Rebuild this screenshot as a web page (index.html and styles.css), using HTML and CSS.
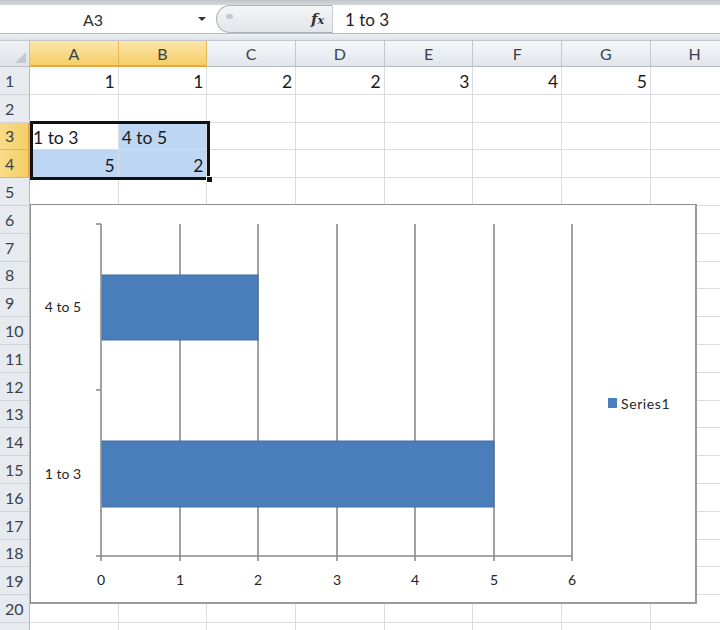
FILE: index.html
```html
<!DOCTYPE html>
<html lang="en">
<head>
    <meta charset="UTF-8">
    <meta name="viewport" content="width=device-width, initial-scale=1.0">
    <title>Book1 - Bar chart</title>
    <link rel="stylesheet" href="styles.css">
</head>
<body>
    <div class="ribbon-edge"></div>
    <div class="formula-bar">
        <div class="name-box">
            <span class="name">A3</span>
            <span class="caret"></span>
        </div>
        <div class="fx-box">
            <span class="grip"></span>
            <span class="fx">f<span class="fx-x">x</span></span>
        </div>
        <div class="formula">1 to 3</div>
    </div>
    <div class="bar-gap"></div>

    <div class="sheet">
        <div class="corner"><span class="corner-tri"></span></div>
        <div class="hd sel-h">A</div><div class="hd sel-h">B</div><div class="hd">C</div><div class="hd">D</div>
        <div class="hd">E</div><div class="hd">F</div><div class="hd">G</div><div class="hd">H</div>

        <div class="rh">1</div><div class="c num">1</div><div class="c num">1</div><div class="c num">2</div><div class="c num">2</div><div class="c num">3</div><div class="c num">4</div><div class="c num">5</div><div class="c"></div>
        <div class="rh">2</div><div class="c"></div><div class="c"></div><div class="c"></div><div class="c"></div><div class="c"></div><div class="c"></div><div class="c"></div><div class="c"></div>
        <div class="rh sel-h">3</div><div class="c">1 to 3</div><div class="c fill">4 to 5</div><div class="c"></div><div class="c"></div><div class="c"></div><div class="c"></div><div class="c"></div><div class="c"></div>
        <div class="rh sel-h">4</div><div class="c num fill">5</div><div class="c num fill">2</div><div class="c"></div><div class="c"></div><div class="c"></div><div class="c"></div><div class="c"></div><div class="c"></div>
        <div class="rh">5</div><div class="c"></div><div class="c"></div><div class="c"></div><div class="c"></div><div class="c"></div><div class="c"></div><div class="c"></div><div class="c"></div>
        <div class="rh">6</div><div class="c"></div><div class="c"></div><div class="c"></div><div class="c"></div><div class="c"></div><div class="c"></div><div class="c"></div><div class="c"></div>
        <div class="rh">7</div><div class="c"></div><div class="c"></div><div class="c"></div><div class="c"></div><div class="c"></div><div class="c"></div><div class="c"></div><div class="c"></div>
        <div class="rh">8</div><div class="c"></div><div class="c"></div><div class="c"></div><div class="c"></div><div class="c"></div><div class="c"></div><div class="c"></div><div class="c"></div>
        <div class="rh">9</div><div class="c"></div><div class="c"></div><div class="c"></div><div class="c"></div><div class="c"></div><div class="c"></div><div class="c"></div><div class="c"></div>
        <div class="rh">10</div><div class="c"></div><div class="c"></div><div class="c"></div><div class="c"></div><div class="c"></div><div class="c"></div><div class="c"></div><div class="c"></div>
        <div class="rh">11</div><div class="c"></div><div class="c"></div><div class="c"></div><div class="c"></div><div class="c"></div><div class="c"></div><div class="c"></div><div class="c"></div>
        <div class="rh">12</div><div class="c"></div><div class="c"></div><div class="c"></div><div class="c"></div><div class="c"></div><div class="c"></div><div class="c"></div><div class="c"></div>
        <div class="rh">13</div><div class="c"></div><div class="c"></div><div class="c"></div><div class="c"></div><div class="c"></div><div class="c"></div><div class="c"></div><div class="c"></div>
        <div class="rh">14</div><div class="c"></div><div class="c"></div><div class="c"></div><div class="c"></div><div class="c"></div><div class="c"></div><div class="c"></div><div class="c"></div>
        <div class="rh">15</div><div class="c"></div><div class="c"></div><div class="c"></div><div class="c"></div><div class="c"></div><div class="c"></div><div class="c"></div><div class="c"></div>
        <div class="rh">16</div><div class="c"></div><div class="c"></div><div class="c"></div><div class="c"></div><div class="c"></div><div class="c"></div><div class="c"></div><div class="c"></div>
        <div class="rh">17</div><div class="c"></div><div class="c"></div><div class="c"></div><div class="c"></div><div class="c"></div><div class="c"></div><div class="c"></div><div class="c"></div>
        <div class="rh">18</div><div class="c"></div><div class="c"></div><div class="c"></div><div class="c"></div><div class="c"></div><div class="c"></div><div class="c"></div><div class="c"></div>
        <div class="rh">19</div><div class="c"></div><div class="c"></div><div class="c"></div><div class="c"></div><div class="c"></div><div class="c"></div><div class="c"></div><div class="c"></div>
        <div class="rh">20</div><div class="c"></div><div class="c"></div><div class="c"></div><div class="c"></div><div class="c"></div><div class="c"></div><div class="c"></div><div class="c"></div>
        <div class="rh"></div><div class="c"></div><div class="c"></div><div class="c"></div><div class="c"></div><div class="c"></div><div class="c"></div><div class="c"></div><div class="c"></div>

        <!-- selected range A3:B4 -->
        <div class="selection"><span class="handle"></span></div>

        <!-- embedded chart -->
        <div class="chart">
            <svg width="666" height="399" viewBox="0 0 666 399">
                <g class="grid">
                    <line x1="150" y1="20" x2="150" y2="357"/>
                    <line x1="228" y1="20" x2="228" y2="357"/>
                    <line x1="307" y1="20" x2="307" y2="357"/>
                    <line x1="385" y1="20" x2="385" y2="357"/>
                    <line x1="464" y1="20" x2="464" y2="357"/>
                    <line x1="542" y1="20" x2="542" y2="357"/>
                </g>
                <rect class="bar" x="72" y="71" width="156" height="65"/>
                <rect class="bar" x="72" y="237" width="392" height="66"/>
                <g class="axis">
                    <line x1="71" y1="20" x2="71" y2="357"/>
                    <line x1="66" y1="352" x2="542" y2="352"/>
                    <line x1="66" y1="20" x2="71" y2="20"/>
                    <line x1="66" y1="186" x2="71" y2="186"/>
                </g>
                <g class="labels">
                    <text x="33" y="108">4 to 5</text>
                    <text x="33" y="275">1 to 3</text>
                    <text x="71" y="381">0</text>
                    <text x="150" y="381">1</text>
                    <text x="228" y="381">2</text>
                    <text x="307" y="381">3</text>
                    <text x="385" y="381">4</text>
                    <text x="464" y="381">5</text>
                    <text x="542" y="381">6</text>
                </g>
                <rect class="legend-key" x="578" y="194" width="9" height="10"/>
                <text class="legend" x="591" y="205">Series1</text>
            </svg>
        </div>
    </div>
</body>
</html>
```

FILE: styles.css
```css
* {
    box-sizing: border-box;
    margin: 0;
    padding: 0;
}

body {
    width: 720px;
    height: 630px;
    overflow: hidden;
    background: #fff;
    font-family: Lato, "Open Sans", sans-serif;
    color: #222;
}

.ribbon-edge {
    height: 5px;
    background: linear-gradient(#bfc4ca, #d6dade);
}

.formula-bar {
    display: flex;
    height: 29px;
    background: #fff;
    border-bottom: 1px solid #b6bcc4;
}

.name-box {
    width: 216px;
    display: flex;
    align-items: center;
}

.name-box .name {
    width: 186px;
    text-align: center;
    font-size: 16px;
    color: #2e2e2e;
}

.caret {
    width: 0;
    height: 0;
    margin-left: 12px;
    border-left: 4px solid transparent;
    border-right: 4px solid transparent;
    border-top: 4px solid #333;
}

.fx-box {
    width: 117px;
    display: flex;
    align-items: center;
    justify-content: space-between;
    padding: 0 8px 0 9px;
    background: linear-gradient(#f4f5f7, #e3e6ea);
    border: 1px solid #acb2ba;
    border-right-color: #c8ccd1;
    border-radius: 15px 0 0 15px;
}

.grip {
    width: 7px;
    height: 5px;
    border-radius: 3px;
    background: #c4c8ce;
    margin-top: -6px;
}

.fx {
    font-family: "DejaVu Serif", serif;
    font-style: italic;
    font-weight: bold;
    font-size: 15px;
    color: #333;
}

.fx-x {
    font-size: 11px;
}

.formula {
    flex: 1;
    padding-left: 12px;
    display: flex;
    align-items: center;
    font-size: 17px;
    color: #1e1e1e;
}

.bar-gap {
    height: 7px;
    background: linear-gradient(#eef0f3, #dfe3e8);
    border-bottom: 1px solid #c2c7cd;
}

.sheet {
    position: relative;
    display: grid;
    grid-template-columns: 30px repeat(8, 88.7px);
    grid-template-rows: 26px;
    grid-auto-rows: 27.8px;
}

.corner {
    position: relative;
    background: linear-gradient(#eef1f4, #dfe3e8);
    border-right: 1px solid #b9bfc6;
    border-bottom: 1px solid #b9bfc6;
}

.corner-tri {
    position: absolute;
    right: 3px;
    bottom: 3px;
    width: 0;
    height: 0;
    border-left: 11px solid transparent;
    border-bottom: 11px solid #c3c8ce;
}

.hd {
    display: flex;
    align-items: center;
    justify-content: center;
    font-size: 16px;
    color: #38414c;
    background: linear-gradient(#f5f7f9, #e2e6eb);
    border-right: 1px solid #c3c8ce;
    border-bottom: 1px solid #b3b9c1;
}

.rh {
    display: flex;
    align-items: center;
    padding-left: 5px;
    font-size: 16px;
    color: #38414c;
    background: #e7eaee;
    border-right: 1px solid #b3b9c1;
    border-bottom: 1px solid #cfd3d8;
}

.hd.sel-h {
    background: linear-gradient(#fce7a8, #f6cd6a);
    border-right-color: #e3b55a;
    border-bottom: 2px solid #e8a83b;
}

.rh.sel-h {
    background: linear-gradient(90deg, #f9dc88, #f5cd6a);
    border-bottom-color: #e3b55a;
    border-right: 2px solid #e8a83b;
}

.c {
    display: flex;
    align-items: center;
    padding: 3px 3px 0;
    font-size: 17.5px;
    color: #1a1a1a;
    white-space: nowrap;
    border-right: 1px solid #dadcdf;
    border-bottom: 1px solid #dadcdf;
}

.c.num {
    justify-content: flex-end;
}

.c.fill {
    background: #bdd6f3;
}

.selection {
    position: absolute;
    left: 30px;
    top: 80px;
    width: 180px;
    height: 59px;
    border: 3px solid #111;
}

.handle {
    position: absolute;
    right: -6px;
    bottom: -6px;
    width: 7px;
    height: 7px;
    background: #111;
    border: 1px solid #fff;
}

.chart {
    position: absolute;
    left: 30px;
    top: 163px;
    width: 667px;
    height: 400px;
    background: #fff;
    border: 1px solid #8d8d8d;
    border-right: 2px solid #9a9a9a;
    border-bottom: 2px solid #9a9a9a;
}

.chart svg {
    display: block;
    margin: -1px 0 0 -1px;
}

.grid line,
.axis line {
    stroke: #8a8a8a;
    stroke-width: 1.6;
}

.bar {
    fill: #4a7ebb;
    stroke: #3e6ea8;
    stroke-width: 1;
}

.labels text {
    font-family: Lato, "Open Sans", sans-serif;
    font-size: 14px;
    fill: #262626;
    text-anchor: middle;
}

.legend-key {
    fill: #4a7ebb;
}

.legend {
    font-family: Lato, "Open Sans", sans-serif;
    font-size: 14px;
    letter-spacing: 0.6px;
    fill: #262626;
}
```
